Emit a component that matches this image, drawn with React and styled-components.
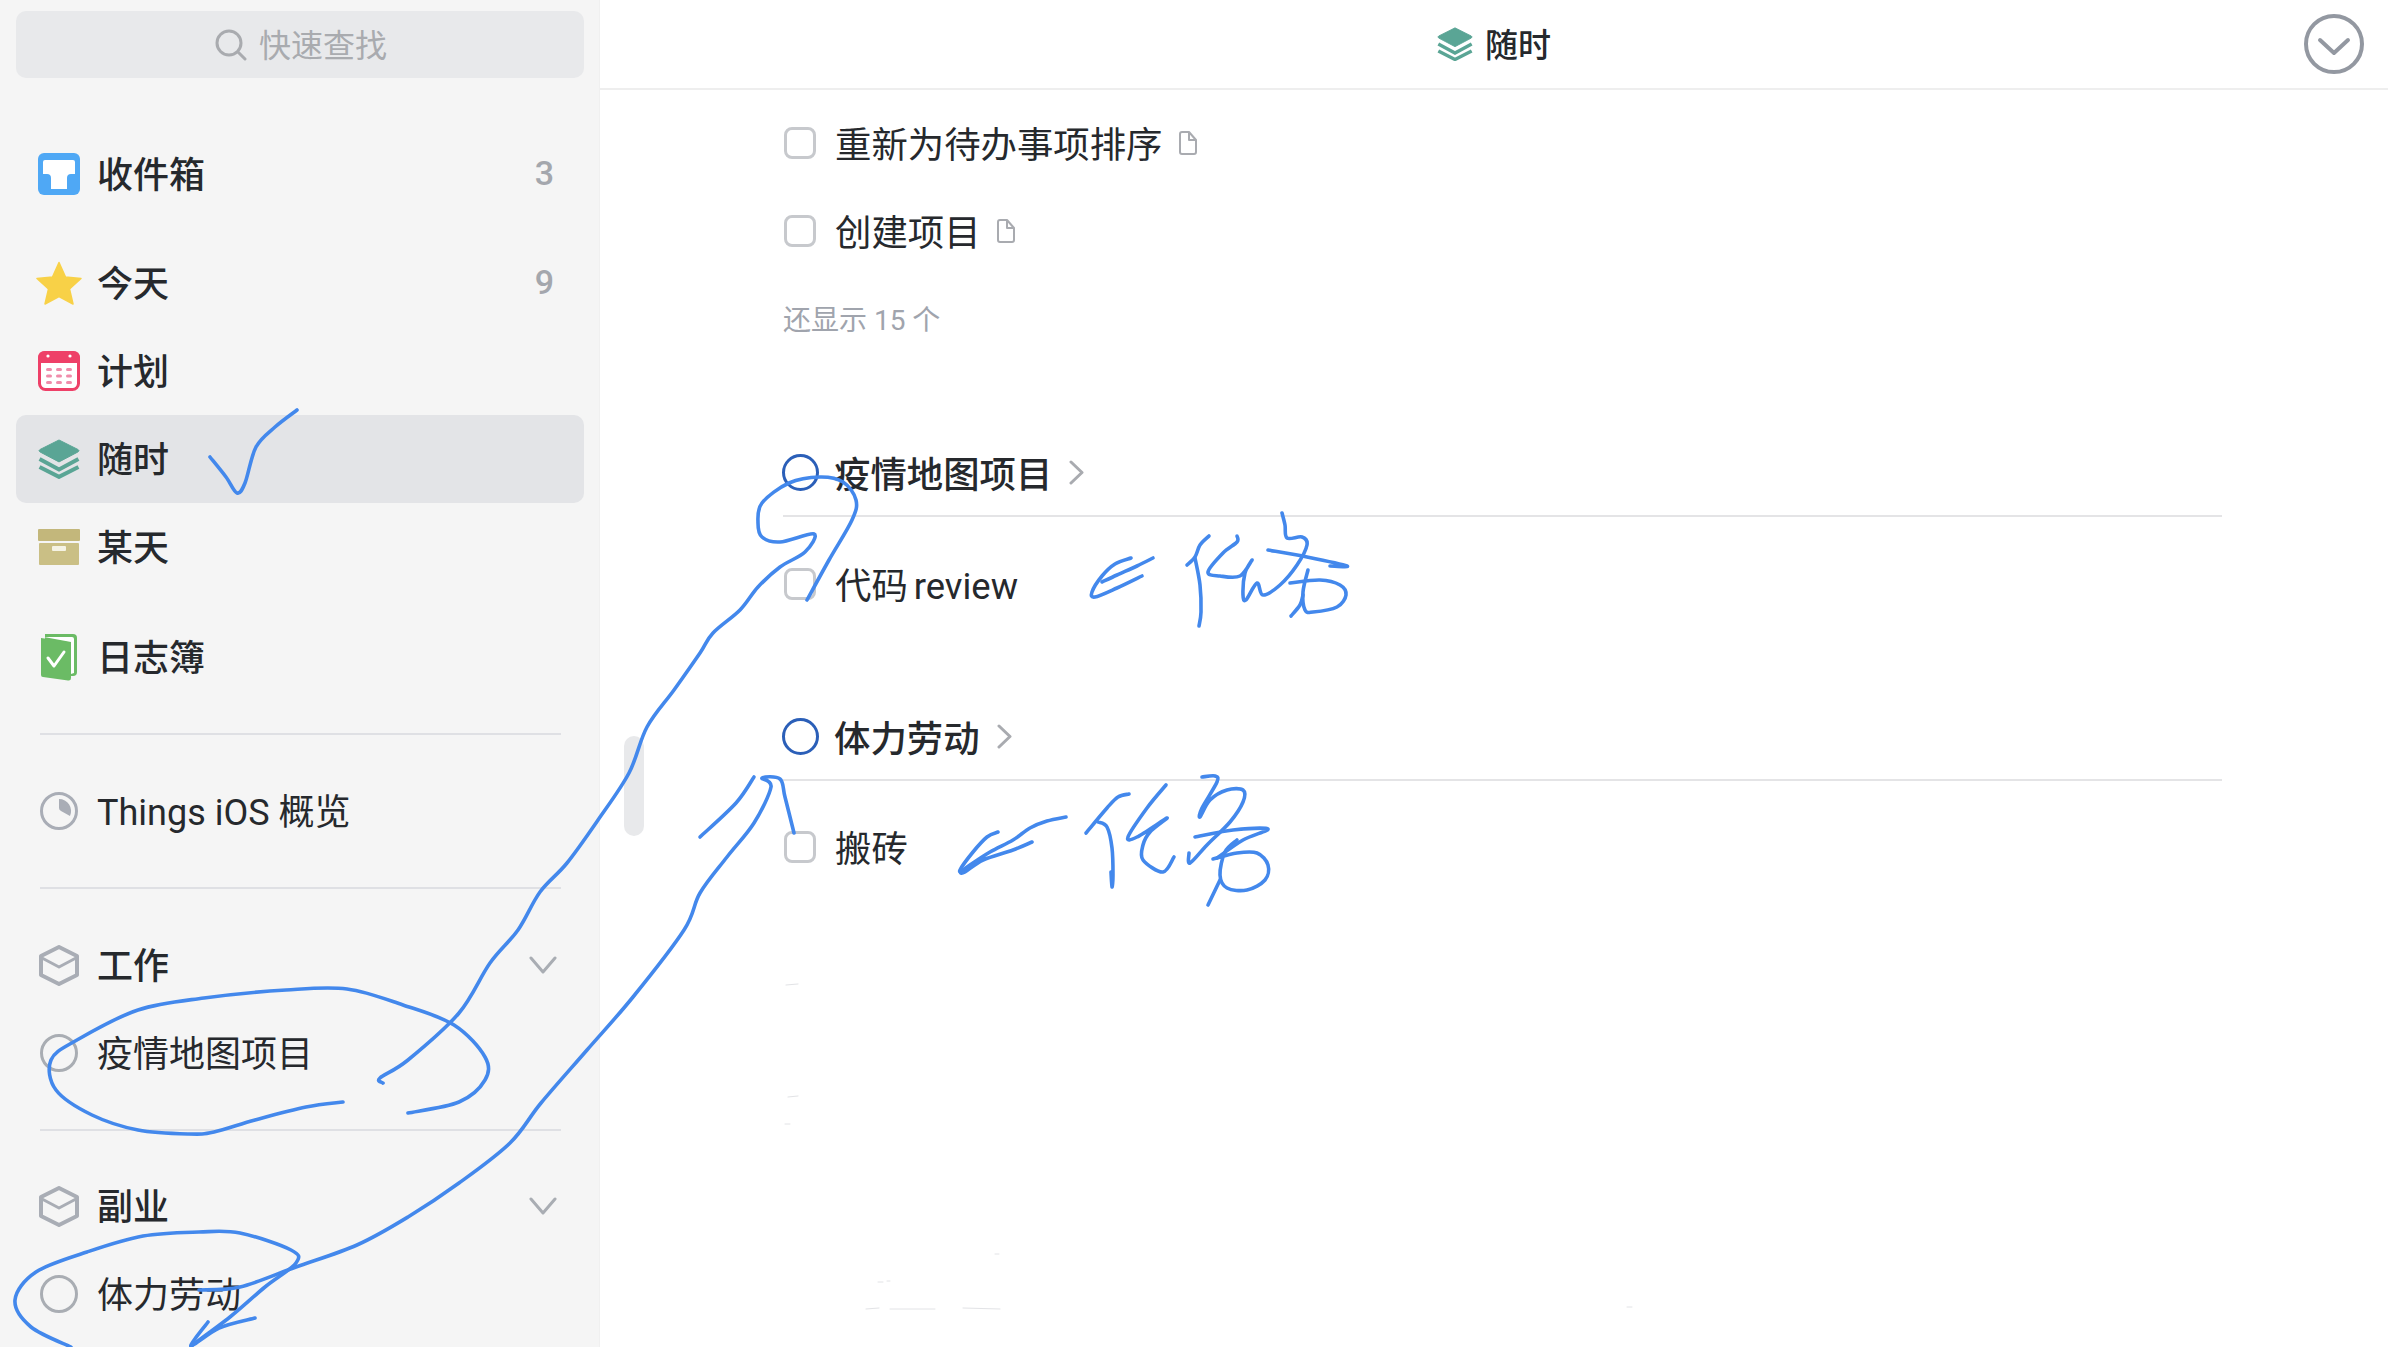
import React from "react";
import styled, { createGlobalStyle } from "styled-components";

const GlobalStyle = createGlobalStyle`
  html, body {
    margin: 0;
    height: 100%;
    overflow: hidden;
    background: #fff;
  }
  body {
    font-family: Roboto, "Noto Sans CJK SC", sans-serif;
    color: #26292d;
  }
`;

const Page = styled.div`
  position: relative;
  display: flex;
  height: 100vh;
  overflow: hidden;
`;

const Sidebar = styled.aside`
  width: 600px;
  flex: none;
  box-sizing: border-box;
  padding: 11px 15px 0 16px;
  background: #f5f5f5;
  border-right: 1px solid #f0f0f0;
`;

const SearchBox = styled.div`
  height: 67px;
  display: flex;
  align-items: center;
  justify-content: center;
  gap: 12px;
  padding-left: 2px;
  border-radius: 10px;
  background: #e8e9eb;
  color: #a9abaf;
  font-size: 32px;
  margin-bottom: 52px;
`;

const SearchText = styled.span`
  padding-bottom: 4px;
`;

const NavGroup = styled.div`
  margin-top: ${(props) => props.$top || 0}px;
`;

const NavRow = styled.div`
  height: 88px;
  display: flex;
  align-items: center;
  padding: 0 27px 0 20px;
  border-radius: 10px;
  font-size: 36px;
  font-weight: ${(props) => (props.$bold ? 500 : 400)};
  background: ${(props) => (props.$active ? "#e3e4e7" : "transparent")};
`;

const IconSlot = styled.span`
  width: 46px;
  margin-right: 15px;
  flex: none;
  display: flex;
  align-items: center;
  justify-content: center;
`;

const NavLabel = styled.span`
  flex: 1;
  white-space: nowrap;
  padding-bottom: 4px;
`;

const Count = styled.span`
  color: #a4a7ad;
  font-size: 34px;
  margin-right: 3px;
  padding-bottom: 2px;
`;

const Rule = styled.div`
  height: 2px;
  margin: 32px 23px 0 24px;
  background: #dfe0e4;
`;

const Main = styled.main`
  position: relative;
  flex: 1;
  min-width: 0;
`;

const ScrollThumb = styled.div`
  position: absolute;
  left: 24px;
  top: 736px;
  width: 20px;
  height: 100px;
  border-radius: 10px;
  background: #e8e9eb;
`;

const Header = styled.header`
  height: 88px;
  display: grid;
  grid-template-columns: 1fr auto 1fr;
  align-items: center;
  padding: 0 24px;
  border-bottom: 2px solid #eeeeee;
`;

const HeaderTitle = styled.div`
  grid-column: 2;
  display: flex;
  align-items: center;
  gap: 12px;
  font-size: 33px;
  font-weight: 500;
`;

const HeaderText = styled.span`
  padding-bottom: 2px;
`;

const HeaderAction = styled.div`
  justify-self: end;
  display: flex;
`;

const Content = styled.div`
  padding: 9px 166px 0 183px;
`;

const Task = styled.div`
  height: 88px;
  display: flex;
  align-items: center;
  font-size: 36.4px;
  word-spacing: -3px;
  white-space: nowrap;
  margin-top: ${(props) => props.$top || 0}px;
`;

const TaskText = styled.span`
  padding-bottom: 2px;
`;

const Checkbox = styled.span`
  width: 32px;
  height: 32px;
  box-sizing: border-box;
  margin: 0 19px 0 1px;
  border: 3px solid #c7c9cd;
  border-radius: 8px;
  background: #fff;
`;

const NoteMark = styled.span`
  display: flex;
  margin-left: 16px;
`;

const MoreLink = styled.div`
  height: 88px;
  display: flex;
  align-items: center;
  font-size: 28px;
  color: #a0a4ad;
  padding-bottom: 2px;
  box-sizing: border-box;
`;

const ProjectHead = styled.div`
  height: 86px;
  display: flex;
  align-items: center;
  margin-top: ${(props) => props.$top}px;
  border-bottom: 2px solid #e4e4e6;
  font-size: 36.4px;
  font-weight: 500;
  white-space: nowrap;
`;

const ProjectRing = styled.span`
  width: 37px;
  height: 37px;
  box-sizing: border-box;
  margin: 0 15px 0 -1px;
  border: 3px solid #2b5fb8;
  border-radius: 50%;
`;

const ProjectChevron = styled.span`
  display: flex;
  margin-left: 17px;
`;

const InkLayer = styled.svg`
  position: absolute;
  left: 0;
  top: 0;
  pointer-events: none;
`;

const SearchIcon = () => (
  <svg width="32" height="32" viewBox="0 0 32 32" fill="none" stroke="#a9abaf" strokeWidth="3" strokeLinecap="round">
    <circle cx="14" cy="14" r="12" />
    <path d="M23 23l7 7" />
  </svg>
);

const InboxIcon = () => (
  <svg width="42" height="42" viewBox="0 0 42 42">
    <rect width="42" height="42" rx="6" fill="#4fa8f5" />
    <path d="M5 9Q5 7 7 7H35Q37 7 37 9V21H33Q29 21 29 25V36H13V25Q13 21 9 21H5Z" fill="#fff" />
  </svg>
);

const StarIcon = () => (
  <svg width="46" height="44" viewBox="0 0 46 44">
    <path
      d="M23 1.5L29.5 16L45 17.5L33.5 28L37 43L23 35.5L9 43L12.5 28L1 17.5L16.5 16Z"
      fill="#f8d147"
      stroke="#f8d147"
      strokeWidth="1.5"
      strokeLinejoin="round"
    />
  </svg>
);

const CalendarIcon = () => {
  const dots = [];
  for (let row = 0; row < 3; row++) {
    for (let col = 0; col < 3; col++) {
      dots.push(<rect key={`${row}_${col}`} x={8 + col * 10} y={17 + row * 6.5} width="6" height="3" rx="1.5" fill="#f08cab" />);
    }
  }
  return (
    <svg width="42" height="40" viewBox="0 0 42 40">
      <rect x="1.5" y="1.5" width="39" height="37" rx="6" fill="#fff" stroke="#ee4068" strokeWidth="3" />
      <path d="M0 7Q0 0 7 0H35Q42 0 42 7V12H0Z" fill="#ee4068" />
      <circle cx="10" cy="5" r="1.6" fill="#fff" />
      <circle cx="32" cy="5" r="1.6" fill="#fff" />
      {dots}
    </svg>
  );
};

const LayersIcon = ({ size = 42 }) => (
  <svg width={size} height={size * 0.95} viewBox="0 0 42 40" fill="none" stroke="#5aa595">
    <path d="M21 1L40 10.5Q42 11.5 40 13L21 23L2 13Q0 11.5 2 10.5Z" fill="#5aa595" strokeWidth="1" strokeLinejoin="round" />
    <path d="M1.5 20L21 30.5L40.500 20" strokeWidth="4" />
    <path d="M1.5 28L21 38L40.500 28" strokeWidth="4" />
  </svg>
);

const BoxIcon = () => (
  <svg width="42" height="36" viewBox="0 0 42 36">
    <rect width="42" height="12" rx="1" fill="#c3b77b" />
    <rect x="1" y="14" width="40" height="22" rx="1" fill="#cabf85" />
    <rect x="14" y="17" width="14" height="5" rx="1" fill="#f5f3e4" />
  </svg>
);

const BookIcon = () => (
  <svg width="36" height="47" viewBox="0 0 36 47">
    <path d="M4 0H32Q36 0 36 4V38Q36 42 32 42H4Z" fill="#6bbb65" />
    <path d="M3 3H31Q33 3 33 5V39L30 40V8Z" fill="#fff" />
    <path d="M0 4L27 8Q30 8.500 30 12V44Q30 47 27 46.500L2 43Q0 43 0 41Z" fill="#6bbb65" />
    <path d="M7 24L13 32L23 18" fill="none" stroke="#fff" strokeWidth="3" strokeLinecap="round" strokeLinejoin="round" />
  </svg>
);

const ClockIcon = () => (
  <svg width="38" height="38" viewBox="0 0 38 38">
    <circle cx="19" cy="19" r="17.5" fill="none" stroke="#a9adb6" strokeWidth="3" />
    <path d="M19 7A12 12 0 0 1 30 24L21 19Q19 18 19 16Z" fill="#a9adb6" />
  </svg>
);

const CubeIcon = () => (
  <svg width="40" height="41" viewBox="0 0 40 41" fill="none" stroke="#a9adb5" strokeLinejoin="round" strokeLinecap="round">
    <path d="M20 2L38 11V30L20 39L2 30V11Z" strokeWidth="4" />
    <path d="M3 13L20 22L37 13" strokeWidth="3" />
  </svg>
);

const RingIcon = () => (
  <svg width="38" height="38" viewBox="0 0 38 38">
    <circle cx="19" cy="19" r="17.5" fill="none" stroke="#a9adb3" strokeWidth="3" />
  </svg>
);

const ChevronDown = () => (
  <svg width="28" height="18" viewBox="0 0 28 18" fill="none" stroke="#a9adb3" strokeWidth="3" strokeLinecap="round" strokeLinejoin="round">
    <path d="M2 2L14 16L26 2" />
  </svg>
);

const ChevronRight = () => (
  <svg width="15" height="25" viewBox="0 0 15 25" fill="none" stroke="#a9abb0" strokeWidth="3" strokeLinecap="round" strokeLinejoin="round">
    <path d="M2 2L13 12.500L2 23" />
  </svg>
);

const NoteIcon = () => (
  <svg width="18" height="24" viewBox="0 0 18 24" fill="none" stroke="#a9abb0" strokeWidth="2" strokeLinejoin="round">
    <path d="M1 3Q1 1 3 1H10L17 9V21Q17 23 15 23H3Q1 23 1 21Z" />
    <path d="M10 1V9H17" />
  </svg>
);

const CircleChevron = () => (
  <svg width="60" height="60" viewBox="0 0 60 60" fill="none" stroke="#9398a1" strokeLinecap="round" strokeLinejoin="round">
    <circle cx="30" cy="30" r="28" strokeWidth="4" />
    <path d="M16 26L30 39L44 26" strokeWidth="4" />
  </svg>
);

// hand drawn pen strokes, points are in page coordinates
const strokes = [
  // tick on the selected row
  [[210,457],[226,477],[237,493],[245,483],[256,447],[275,427],[297,410]],
  // line from first project to the sidebar
  [[807,600],[829,560],[852,520],[856,500],[843,482],[820,477],[789,483],[762,503],[758,523],[762,537],[780,542],[814,534],[805,552],[780,567],[758,587],[740,610],[713,633],[700,653],[674,690],[647,727],[629,773],[598,820],[567,863],[540,892],[518,930],[490,963],[459,1013],[408,1060],[380,1078],[383,1083]],
  // loop round 疫情地图项目
  [[343,1102],[306,1107],[255,1120],[214,1132],[189,1134],[138,1130],[92,1115],[56,1090],[51,1060],[77,1040],[138,1010],[204,998],[286,990],[347,989],[403,1005],[454,1025],[485,1057],[485,1080],[459,1102],[408,1113]],
  // line from second project to the sidebar
  [[794,833],[785,797],[780,779],[762,778],[771,787],[754,823],[727,857],[700,893],[684,930],[633,997],[587,1050],[541,1103],[510,1143],[459,1183],[408,1217],[357,1245],[296,1267],[240,1287],[199,1290]],
  [[754,777],[736,803],[700,837]],
  // loop round 体力劳动
  [[191,1346],[230,1317],[265,1287],[296,1263],[291,1250],[240,1233],[199,1232],[143,1236],[87,1252],[36,1272],[15,1300],[31,1327],[71,1347]],
  [[255,1318],[219,1328],[191,1346],[208,1322]],
  // first note
  [[1131,558],[1115,564],[1102,576],[1092,592],[1095,597],[1117,588],[1142,576]],
  [[1153,558],[1137,566],[1117,575],[1102,582]],
  [[1209,536],[1200,545],[1195,557],[1187,565]],
  [[1195,558],[1200,585],[1201,612],[1199,626]],
  [[1237,536],[1237,542],[1223,553],[1208,572],[1220,576],[1240,576],[1252,560],[1245,573],[1243,595],[1246,600],[1257,583],[1263,595],[1280,585],[1297,565],[1307,545],[1302,537],[1287,538],[1285,525],[1282,513]],
  [[1268,550],[1307,557],[1347,566],[1330,566]],
  [[1290,583],[1320,580],[1340,585],[1346,595],[1337,607],[1313,612],[1305,610],[1303,592],[1308,570]],
  [[1303,595],[1300,605],[1291,616]],
  // second note
  [[1066,817],[1047,821],[1030,828],[1013,840],[990,852],[970,865],[961,872],[965,872],[983,860],[1013,850],[1032,842]],
  [[998,832],[987,837],[973,852],[960,870],[963,872]],
  [[1129,794],[1118,797],[1107,808],[1086,833]],
  [[1098,822],[1107,827],[1112,848],[1113,875],[1112,887],[1111,872]],
  [[1166,785],[1147,808],[1128,837],[1137,837],[1167,818],[1150,832],[1143,845],[1143,860],[1163,872],[1174,857]],
  [[1202,777],[1215,776],[1217,782],[1202,808],[1200,817],[1210,800],[1227,790],[1243,790],[1243,802],[1230,822],[1207,845],[1190,863],[1189,853]],
  [[1195,837],[1233,830],[1268,829],[1243,840],[1217,858]],
  [[1213,859],[1237,853],[1257,853],[1268,865],[1265,880],[1247,890],[1227,888],[1220,875],[1225,852],[1237,840]],
  [[1220,880],[1208,905]],
];

// leftovers of erased ink on the white page
const specks = [
  [786,985,798,984],
  [788,1097,798,1096],
  [785,1124,790,1124],
  [995,1254,999,1254],
  [878,1282,883,1282],
  [887,1281,890,1281],
  [866,1309,879,1308],
  [890,1309,935,1309],
  [963,1308,1000,1309],
  [1627,1307,1632,1307],
];

const smooth = (points) => {
  let d = `M${points[0][0]} ${points[0][1]}`;
  for (let i = 0; i < points.length - 1; i++) {
    const p0 = points[i - 1] || points[i];
    const p1 = points[i];
    const p2 = points[i + 1];
    const p3 = points[i + 2] || p2;
    const c1x = p1[0] + (p2[0] - p0[0]) / 6;
    const c1y = p1[1] + (p2[1] - p0[1]) / 6;
    const c2x = p2[0] - (p3[0] - p1[0]) / 6;
    const c2y = p2[1] - (p3[1] - p1[1]) / 6;
    d += `C${c1x} ${c1y} ${c2x} ${c2y} ${p2[0]} ${p2[1]}`;
  }
  return d;
};

const Ink = () => (
  <InkLayer width="2388" height="1347" viewBox="0 0 2388 1347" fill="none" strokeLinecap="round" strokeLinejoin="round">
    <g stroke="#4388ec" strokeWidth="3.6">
      {strokes.map((points, index) => (
        <path key={index} d={smooth(points)} />
      ))}
    </g>
    <g stroke="#e2e3e6" strokeWidth="1">
      {specks.map(([x1, y1, x2, y2]) => (
        <line key={`${x1}_${y1}`} x1={x1} y1={y1} x2={x2} y2={y2} />
      ))}
    </g>
  </InkLayer>
);

const App = () => (
  <Page>
    <GlobalStyle />
    <Sidebar>
      <SearchBox>
        <SearchIcon />
        <SearchText>快速查找</SearchText>
      </SearchBox>
      <NavRow $bold>
        <IconSlot><InboxIcon /></IconSlot>
        <NavLabel>收件箱</NavLabel>
        <Count>3</Count>
      </NavRow>
      <NavGroup $top={21}>
        <NavRow $bold>
          <IconSlot><StarIcon /></IconSlot>
          <NavLabel>今天</NavLabel>
          <Count>9</Count>
        </NavRow>
        <NavRow $bold>
          <IconSlot><CalendarIcon /></IconSlot>
          <NavLabel>计划</NavLabel>
        </NavRow>
        <NavRow $bold $active>
          <IconSlot><LayersIcon /></IconSlot>
          <NavLabel>随时</NavLabel>
        </NavRow>
        <NavRow $bold>
          <IconSlot><BoxIcon /></IconSlot>
          <NavLabel>某天</NavLabel>
        </NavRow>
      </NavGroup>
      <NavGroup $top={22}>
        <NavRow $bold>
          <IconSlot><BookIcon /></IconSlot>
          <NavLabel>日志簿</NavLabel>
        </NavRow>
      </NavGroup>
      <Rule />
      <NavGroup $top={32}>
        <NavRow>
          <IconSlot><ClockIcon /></IconSlot>
          <NavLabel>Things iOS 概览</NavLabel>
        </NavRow>
      </NavGroup>
      <Rule />
      <NavGroup $top={32}>
        <NavRow $bold>
          <IconSlot><CubeIcon /></IconSlot>
          <NavLabel>工作</NavLabel>
          <ChevronDown />
        </NavRow>
        <NavRow>
          <IconSlot><RingIcon /></IconSlot>
          <NavLabel>疫情地图项目</NavLabel>
        </NavRow>
      </NavGroup>
      <Rule />
      <NavGroup $top={31}>
        <NavRow $bold>
          <IconSlot><CubeIcon /></IconSlot>
          <NavLabel>副业</NavLabel>
          <ChevronDown />
        </NavRow>
        <NavRow>
          <IconSlot><RingIcon /></IconSlot>
          <NavLabel>体力劳动</NavLabel>
        </NavRow>
      </NavGroup>
    </Sidebar>
    <Main>
      <Header>
        <HeaderTitle>
          <LayersIcon size={36} />
          <HeaderText>随时</HeaderText>
        </HeaderTitle>
        <HeaderAction><CircleChevron /></HeaderAction>
      </Header>
      <ScrollThumb />
      <Content>
        <Task>
          <Checkbox />
          <TaskText>重新为待办事项排序</TaskText>
          <NoteMark><NoteIcon /></NoteMark>
        </Task>
        <Task>
          <Checkbox />
          <TaskText>创建项目</TaskText>
          <NoteMark><NoteIcon /></NoteMark>
        </Task>
        <MoreLink>还显示 15 个</MoreLink>
        <ProjectHead $top={66}>
          <ProjectRing />
          疫情地图项目
          <ProjectChevron><ChevronRight /></ProjectChevron>
        </ProjectHead>
        <Task $top={23}>
          <Checkbox />
          <TaskText>代码 review</TaskText>
        </Task>
        <ProjectHead $top={65}>
          <ProjectRing />
          体力劳动
          <ProjectChevron><ChevronRight /></ProjectChevron>
        </ProjectHead>
        <Task $top={22}>
          <Checkbox />
          <TaskText>搬砖</TaskText>
        </Task>
      </Content>
    </Main>
    <Ink />
  </Page>
);

export default App;
